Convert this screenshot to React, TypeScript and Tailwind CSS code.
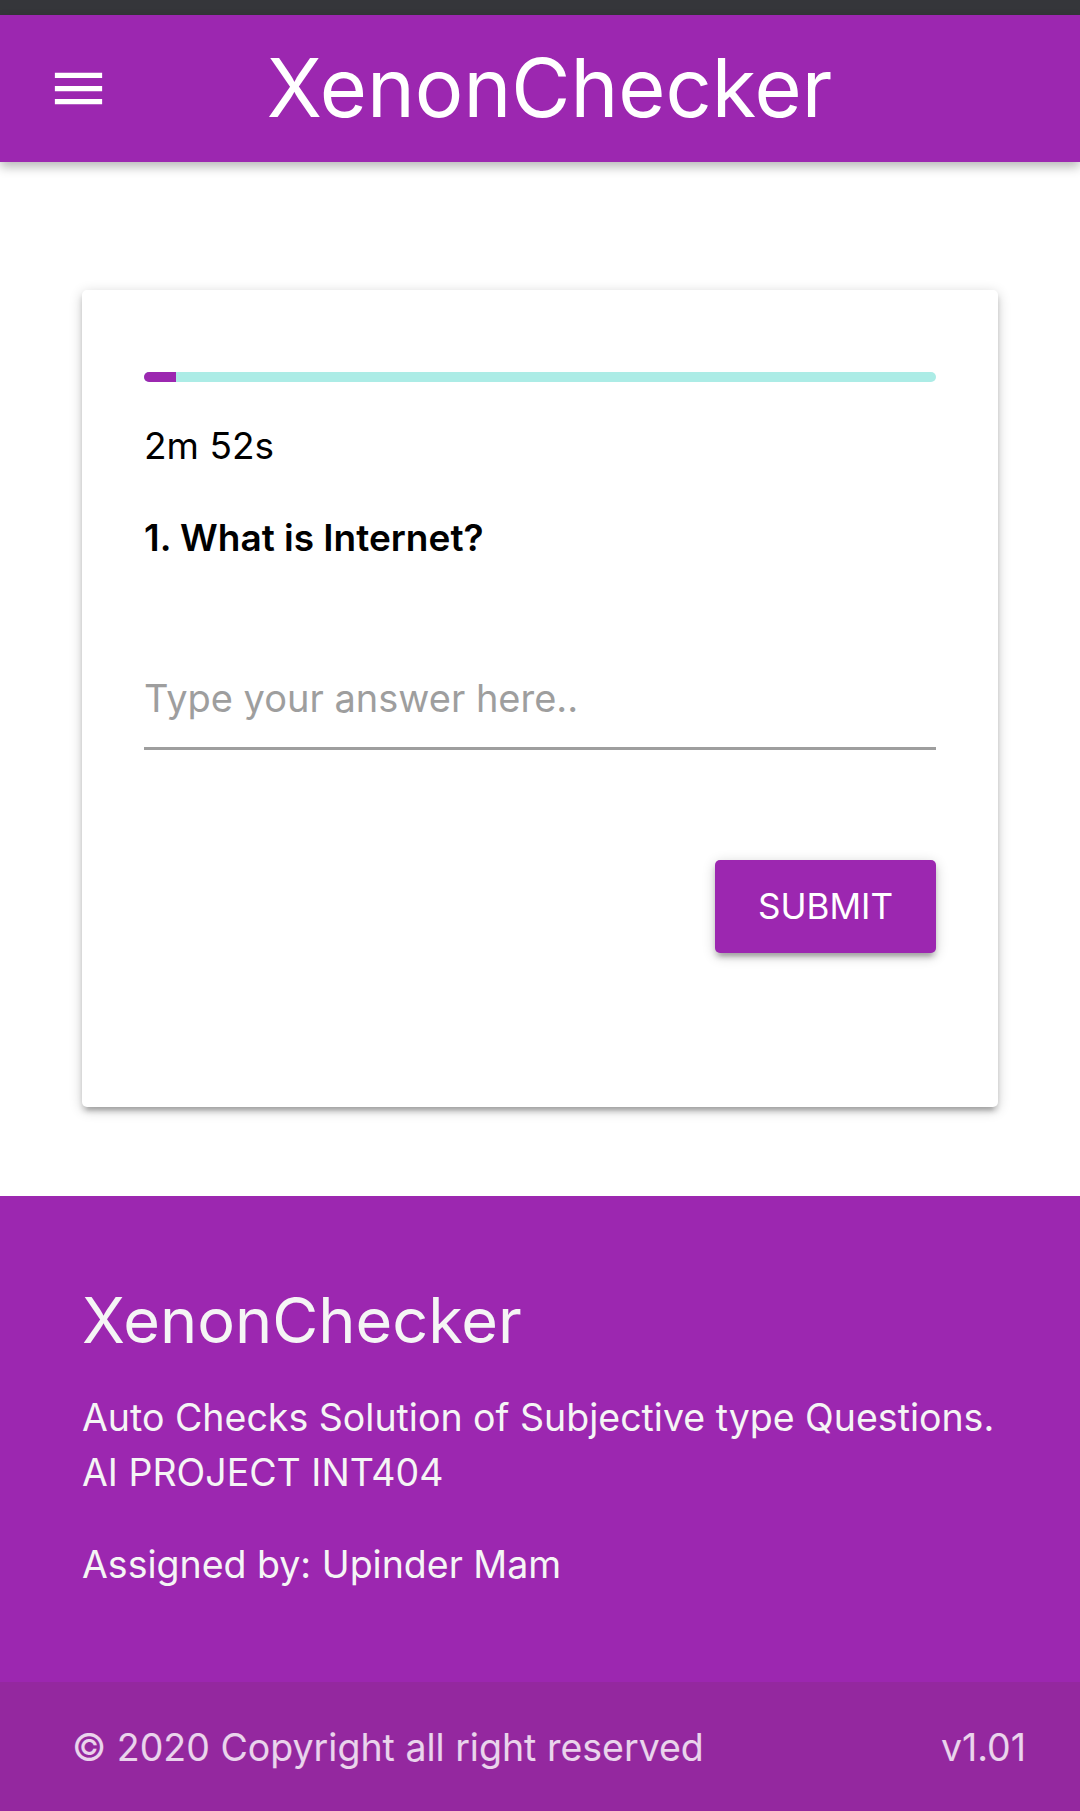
import React from "react";

const MenuIcon = () => (
  <svg viewBox="0 0 24 24" className="h-[63px] w-[63px] fill-white">
    <path d="M3 18h18v-2H3v2zm0-5h18v-2H3v2zm0-7v2h18V6H3z" />
  </svg>
);

const App = () => {
  const progress = 4.1;

  return (
    <div className="min-h-screen bg-white font-['Inter',sans-serif] text-black">
      <div className="h-[15px] bg-[#35363a]" />

      {/* App bar */}
      <header className="relative z-10 grid h-[147px] grid-cols-[1fr_auto_1fr] items-center bg-[#9c27b0] px-[47px] shadow-[0_5px_10px_rgba(0,0,0,0.28)]">
        <button className="justify-self-start">
          <MenuIcon />
        </button>
        <h1 className="pl-[19px] text-[81px] font-normal leading-none text-white">
          XenonChecker
        </h1>
        <div />
      </header>

      {/* Question card */}
      <main className="px-[82px] pt-[128px] pb-[89px]">
        <div className="rounded-[5px] bg-white px-[62px] pt-[82px] pb-[154px] shadow-[0_5px_5px_rgba(0,0,0,0.14),0_8px_3px_-5px_rgba(0,0,0,0.12),0_3px_13px_rgba(0,0,0,0.2)]">
          <div className="h-[10px] overflow-hidden rounded-full bg-[#acece6]">
            <div className="h-full bg-[#9c27b0]" style={{ width: `${progress}%` }} />
          </div>

          <p className="mt-[36px] text-[37px] leading-[55px]">2m 52s</p>

          <h3 className="mt-[37px] text-[37px] font-semibold leading-[55px]">
            1. What is Internet?
          </h3>

          <input
            type="text"
            placeholder="Type your answer here.."
            className="mt-[75px] block h-[110px] w-full border-b-[3px] border-[#9e9e9e] bg-transparent pt-[8px] text-[38px] outline-none placeholder:text-[#9e9e9e]"
          />

          <div className="mt-[110px] flex justify-end">
            <button className="h-[93px] rounded-[5px] bg-[#9c27b0] px-[43px] text-[35px] uppercase text-white shadow-[0_5px_5px_rgba(0,0,0,0.14),0_8px_3px_-5px_rgba(0,0,0,0.12),0_3px_13px_rgba(0,0,0,0.2)]">
              Submit
            </button>
          </div>
        </div>
      </main>

      {/* Footer */}
      <footer className="bg-[#9c27b0] text-[#f5f5f5]">
        <div className="px-[82px] pt-[92px] pb-[90px]">
          <h5 className="text-[63px] leading-[64px]">XenonChecker</h5>
          <p className="mt-[38px] text-[37.5px] leading-[55px]">
            Auto Checks Solution of Subjective type Questions.
            <br />
            AI PROJECT INT404
          </p>
          <p className="mt-[37px] text-[37.5px] leading-[55px]">Assigned by: Upinder Mam</p>
        </div>
        <div className="flex h-[130px] items-center justify-between bg-[#94289f] pl-[72px] pr-[54px] text-[37.5px] leading-[55px] text-white/80">
          <span>© 2020 Copyright all right reserved</span>
          <span>v1.01</span>
        </div>
      </footer>
    </div>
  );
};

export default App;
